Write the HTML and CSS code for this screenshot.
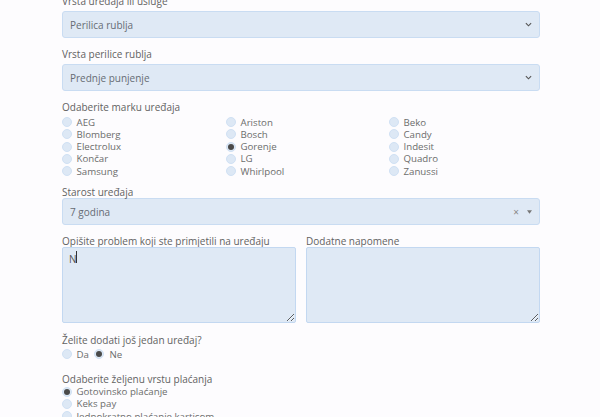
FILE: index.html
```html
<!DOCTYPE html>
<html lang="hr">
<head>
<meta charset="utf-8">
<title>Obrazac</title>
<link rel="stylesheet" href="styles.css">
</head>
<body>
<form class="form">
  <div class="group">
    <div class="label">Vrsta uređaja ili usluge</div>
    <div class="select"><span>Perilica rublja</span>
      <svg class="chev" viewBox="0 0 8 5" width="7" height="5"><path d="M1 1 L4 4 L7 1" fill="none" stroke="#555" stroke-width="1.3"/></svg>
    </div>
  </div>
  <div class="group">
    <div class="label">Vrsta perilice rublja</div>
    <div class="select"><span>Prednje punjenje</span>
      <svg class="chev" viewBox="0 0 8 5" width="7" height="5"><path d="M1 1 L4 4 L7 1" fill="none" stroke="#555" stroke-width="1.3"/></svg>
    </div>
  </div>
  <div class="group brands">
    <div class="label">Odaberite marku uređaja</div>
    <div class="brand-grid">
      <div class="col">
        <label class="radio"><span class="dot"></span>AEG</label>
        <label class="radio"><span class="dot"></span>Blomberg</label>
        <label class="radio"><span class="dot"></span>Electrolux</label>
        <label class="radio"><span class="dot"></span>Končar</label>
        <label class="radio"><span class="dot"></span>Samsung</label>
      </div>
      <div class="col">
        <label class="radio"><span class="dot"></span>Ariston</label>
        <label class="radio"><span class="dot"></span>Bosch</label>
        <label class="radio"><span class="dot on"></span>Gorenje</label>
        <label class="radio"><span class="dot"></span>LG</label>
        <label class="radio"><span class="dot"></span>Whirlpool</label>
      </div>
      <div class="col">
        <label class="radio"><span class="dot"></span>Beko</label>
        <label class="radio"><span class="dot"></span>Candy</label>
        <label class="radio"><span class="dot"></span>Indesit</label>
        <label class="radio"><span class="dot"></span>Quadro</label>
        <label class="radio"><span class="dot"></span>Zanussi</label>
      </div>
    </div>
  </div>
  <div class="group age">
    <div class="label tight">Starost uređaja</div>
    <div class="select"><span>7 godina</span>
      <span class="s2-icons"><span class="clear">×</span><svg viewBox="0 0 6 4" width="5" height="4"><path d="M0 0 L6 0 L3 4 Z" fill="#777"/></svg></span>
    </div>
  </div>
  <div class="group text-row">
    <div class="text-col">
      <div class="label tight">Opišite problem koji ste primjetili na uređaju</div>
      <div class="ta-wrap">
        <textarea class="ta">N</textarea>
        <span class="caret"></span>
      </div>
    </div>
    <div class="text-col">
      <div class="label tight">Dodatne napomene</div>
      <div class="ta-wrap">
        <textarea class="ta"></textarea>
      </div>
    </div>
  </div>
  <div class="group more">
    <div class="label tight">Želite dodati još jedan uređaj?</div>
    <div class="inline-radios">
      <label class="radio"><span class="dot"></span>Da</label>
      <label class="radio"><span class="dot on"></span>Ne</label>
    </div>
  </div>
  <div class="group pay">
    <div class="label tight">Odaberite željenu vrstu plaćanja</div>
    <label class="radio"><span class="dot on"></span>Gotovinsko plaćanje</label>
    <label class="radio"><span class="dot"></span>Keks pay</label>
    <label class="radio"><span class="dot"></span>Jednokratno plaćanje karticom</label>
  </div>
</form>
</body>
</html>
```
FILE: styles.css
```css
html, body {
  margin: 0;
  padding: 0;
  background: #fdfcfe;
  overflow: hidden;
}
body {
  font-family: "Open Sans", "Noto Sans", sans-serif;
  font-size: 10px;
  color: #666;
}
.form {
  width: 478px;
  margin: -5px 0 0 62px;
}
.group {
  margin-bottom: 10px;
}
.label {
  line-height: 13px;
  height: 13px;
  margin-bottom: 3px;
  color: #626262;
  white-space: nowrap;
}
.label.tight {
  line-height: 12px;
  height: 12px;
  margin-bottom: 0;
}
.select {
  box-sizing: border-box;
  height: 27px;
  background: #dfe9f5;
  border: 1px solid #c9dcf2;
  border-radius: 3px;
  display: flex;
  align-items: center;
  justify-content: space-between;
  padding: 0 7px 0 7px;
  color: #666c74;
}
.chev { display: block; }
.s2-icons {
  display: flex;
  align-items: center;
  gap: 8px;
  color: #888;
}
.clear { font-size: 10px; line-height: 10px; }
.brands .label { margin-bottom: 2px; }
.brand-grid {
  display: grid;
  grid-template-columns: 164px 163px 1fr;
}
.radio {
  display: flex;
  align-items: center;
  height: 12.25px;
  line-height: 11px;
  font-size: 9.7px;
  color: #6c6c6c;
  white-space: nowrap;
}
.dot {
  box-sizing: border-box;
  width: 10px;
  height: 10px;
  border-radius: 50%;
  background: #dde8f5;
  border: 1px solid #d0e1f4;
  margin-right: 5px;
  margin-left: -0.5px;
  flex: none;
  display: flex;
  align-items: center;
  justify-content: center;
}
.dot.on::after {
  content: "";
  width: 6px;
  height: 6px;
  border-radius: 50%;
  background: #4a4a4a;
}
.brands { margin-bottom: 9px; }
.text-row {
  display: grid;
  grid-template-columns: 1fr 1fr;
  gap: 10px;
  margin-bottom: 11px;
}
.ta-wrap { position: relative; }
.ta {
  display: block;
  box-sizing: border-box;
  width: 100%;
  height: 76px;
  margin: 0;
  background: #dfe9f5;
  border: 1px solid #c3d8f1;
  border-radius: 2px;
  padding: 4px 6px;
  font-family: inherit;
  font-size: 10px;
  color: #555;
  outline: none;
}
.caret {
  position: absolute;
  left: 14px;
  top: 4px;
  width: 1px;
  height: 12px;
  background: #333;
}
.more .label { margin-bottom: 2px; }
.inline-radios {
  display: flex;
  gap: 6px;
}
.more { margin-bottom: 12px; }
.pay .label { margin-bottom: 1px; }
```
